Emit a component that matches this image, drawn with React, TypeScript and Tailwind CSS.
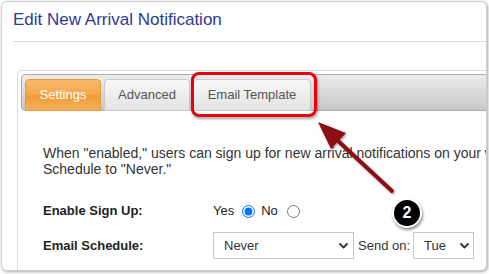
import React from "react";

function Chevron({ className }: { className: string }) {
  return (
    <svg className={className} width="9" height="6" viewBox="0 0 9 6" fill="none">
      <polyline points="1,1 4.5,4.5 8,1" stroke="#333" strokeWidth="1.8" strokeLinecap="round" strokeLinejoin="round" />
    </svg>
  );
}

export default function App() {
  return (
    <div
      className="relative w-[489px] h-[274px] bg-white pt-[1px] pl-[1px] overflow-hidden"
      style={{ fontFamily: '"Liberation Sans", Arial, sans-serif' }}
    >
      {/* Outer card */}
      <div className="w-[486px] h-[270px] border border-[#cfcfcf] rounded-[6px] overflow-hidden shadow-[1px_1px_3px_rgba(0,0,0,0.35)] bg-white">
        <div className="pl-[11px] pt-[9px] text-[17px] leading-[18px] text-[#2d3a94] whitespace-nowrap">
          Edit New Arrival Notification
        </div>
        <div className="ml-[11px] mt-[12px] h-px bg-[#d9d9d9]" />

        {/* Tabs panel */}
        <div className="ml-[15px] mt-[28px] w-[620px] h-[300px] border border-[#dcdcdc] rounded-[3px] p-[3px]">
          <div className="h-[37px] border border-[#aaaaaa] rounded-[4px] bg-gradient-to-b from-[#ececec] to-[#c8c8c8] flex items-end gap-[3px] pl-[3px]">
            <div className="-mb-px h-[32px] w-[76px] rounded-t-[4px] border border-[#e29a3c] bg-[linear-gradient(to_bottom,#f8bb6a_0%,#f4a94f_45%,#f09c37_55%,#f6b05c_100%)] text-white text-[13px] flex items-center justify-center">
              Settings
            </div>
            <div className="-mb-px h-[32px] w-[86px] rounded-t-[4px] border border-[#c9c9c9] bg-gradient-to-b from-[#f8f8f8] to-[#e3e3e3] text-[#555] text-[13px] flex items-center justify-center">
              Advanced
            </div>
            <div className="-mb-px h-[32px] w-[118px] rounded-t-[4px] border border-[#c9c9c9] bg-gradient-to-b from-[#f8f8f8] to-[#e3e3e3] text-[#555] text-[13px] flex items-center justify-center">
              Email Template
            </div>
          </div>

          <div className="pl-[22px]">
            <div className="mt-[34px] text-[14px] leading-[16px] text-[#333]">
              <div className="whitespace-nowrap">
                When "enabled," users can sign up for new arrival notifications on your website. To stop all emails, set Email
              </div>
              <div className="whitespace-nowrap">Schedule to "Never."</div>
            </div>

            <div className="mt-[24px] h-[20px] flex items-center text-[13px] text-[#222]">
              <div className="w-[170px] font-bold">Enable Sign Up:</div>
              <span>Yes</span>
              <input type="radio" name="signup" defaultChecked className="ml-[8px] w-[13px] h-[13px] m-0" />
              <span className="ml-[6px]">No</span>
              <input type="radio" name="signup" className="ml-[9px] w-[13px] h-[13px] m-0" />
            </div>

            <div className="mt-[11px] h-[27px] flex items-center text-[13px] text-[#222]">
              <div className="w-[170px] font-bold">Email Schedule:</div>
              <div className="relative">
                <select
                  defaultValue="Never"
                  className="appearance-none w-[141px] h-[27px] border border-[#c8c8c8] bg-white pl-[10px] text-[13px] text-[#333] outline-none rounded-none"
                  style={{ fontFamily: '"Liberation Sans", Arial, sans-serif' }}
                >
                  <option>Never</option>
                </select>
                <Chevron className="absolute right-[6px] top-[11px] pointer-events-none" />
              </div>
              <span className="ml-[4px] mr-[3px] text-[#333]">Send on:</span>
              <div className="relative">
                <select
                  defaultValue="Tue"
                  className="appearance-none w-[61px] h-[27px] border border-[#c8c8c8] bg-white pl-[10px] text-[13px] text-[#333] outline-none rounded-none"
                  style={{ fontFamily: '"Liberation Sans", Arial, sans-serif' }}
                >
                  <option>Tue</option>
                </select>
                <Chevron className="absolute right-[5px] top-[11px] pointer-events-none" />
              </div>
            </div>
          </div>
        </div>
      </div>

      {/* Annotation: red highlight box */}
      <div className="absolute left-[191px] top-[72px] w-[126px] h-[45px] border-[3px] border-[#e8000a] rounded-[8px] shadow-[1px_2px_3px_rgba(0,0,0,0.35)] pointer-events-none" />

      {/* Annotation: arrow */}
      <svg className="absolute left-0 top-0 pointer-events-none" width="489" height="274" viewBox="0 0 489 274">
        <defs>
          <filter id="sh" x="-20%" y="-20%" width="140%" height="140%">
            <feDropShadow dx="1" dy="1.5" stdDeviation="1.2" floodColor="#000" floodOpacity="0.35" />
          </filter>
        </defs>
        <g filter="url(#sh)">
          <line x1="336" y1="139" x2="392" y2="191" stroke="#8c0f12" strokeWidth="4" strokeLinecap="round" />
          <polygon points="318,122 346,133 331,149" fill="#8c0f12" />
        </g>
      </svg>

      {/* Annotation: badge */}
      <div className="absolute left-[392px] top-[198px] w-[30px] h-[30px] rounded-full bg-black border-2 border-white shadow-[1px_2px_3px_rgba(0,0,0,0.45)] flex items-center justify-center text-white font-bold text-[16px] leading-none">
        2
      </div>
    </div>
  );
}
